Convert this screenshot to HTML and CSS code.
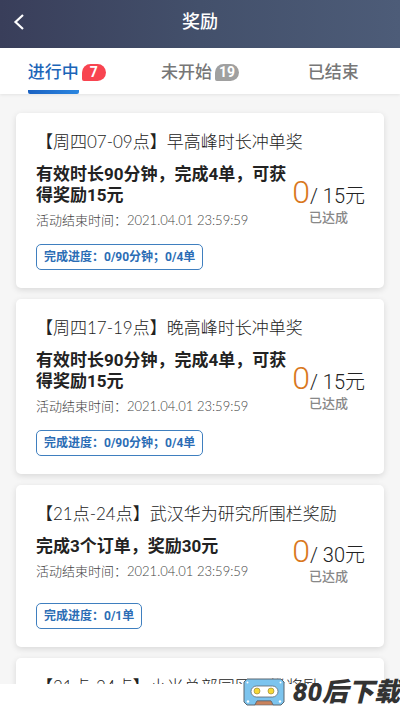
FILE: index.html
```html
<!DOCTYPE html>
<html lang="zh-CN">
<head>
<meta charset="utf-8">
<meta name="viewport" content="width=device-width, initial-scale=1">
<title>奖励</title>
<link rel="stylesheet" href="styles.css">
</head>
<body>
<div class="screen">
  <header class="topbar">
    <button class="back" type="button" aria-label="返回">
      <svg width="12" height="18" viewBox="0 0 12 18"><path d="M10 2 2.500 9 10 16" fill="none" stroke="#fff" stroke-width="2.200"/></svg>
    </button>
    <h1 class="topbar-title">奖励</h1>
  </header>
  <nav class="tabs">
    <a class="tab tab-active" href="#ongoing"><span class="tab-label">进行中</span><span class="badge badge-red">7</span></a>
    <a class="tab" href="#upcoming"><span class="tab-label">未开始</span><span class="badge">19</span></a>
    <a class="tab" href="#ended"><span class="tab-label">已结束</span></a>
  </nav>
  <main class="list">
    <article class="card">
      <h2 class="card-title">【周四07-09点】早高峰时长冲单奖</h2>
      <div class="card-body">
        <div class="info">
          <p class="rule">有效时长90分钟，完成4单，可获得奖励15元</p>
          <p class="time">活动结束时间：2021.04.01 23:59:59</p>
        </div>
        <div class="reward">
          <p class="amount"><span class="done">0</span>/ 15元</p>
          <p class="state">已达成</p>
        </div>
      </div>
      <p class="progress">完成进度：0/90分钟；0/4单</p>
    </article>
    <article class="card">
      <h2 class="card-title">【周四17-19点】晚高峰时长冲单奖</h2>
      <div class="card-body">
        <div class="info">
          <p class="rule">有效时长90分钟，完成4单，可获得奖励15元</p>
          <p class="time">活动结束时间：2021.04.01 23:59:59</p>
        </div>
        <div class="reward">
          <p class="amount"><span class="done">0</span>/ 15元</p>
          <p class="state">已达成</p>
        </div>
      </div>
      <p class="progress">完成进度：0/90分钟；0/4单</p>
    </article>
    <article class="card">
      <h2 class="card-title">【21点-24点】武汉华为研究所围栏奖励</h2>
      <div class="card-body">
        <div class="info">
          <p class="rule">完成3个订单，奖励30元</p>
          <p class="time">活动结束时间：2021.04.01 23:59:59</p>
        </div>
        <div class="reward">
          <p class="amount"><span class="done">0</span>/ 30元</p>
          <p class="state">已达成</p>
        </div>
      </div>
      <p class="progress">完成进度：0/1单</p>
    </article>
    <article class="card">
      <h2 class="card-title">【21点-24点】小米总部园区围栏奖励</h2>
    </article>
  </main>
  <footer class="footer"></footer>
  <div class="mark">
    <svg class="mark-logo" width="42" height="28" viewBox="0 0 42 28">
      <path d="M4 1H38L41 4V24L38 27H30L28 23H14L12 27H4L1 24V4Z" fill="#7cc4ee" stroke="#5a6670" stroke-width="1"/>
      <path d="M14 23H28L30 27H12Z" fill="#c9825c" stroke="#5a6670" stroke-width=".6"/>
      <rect x="8" y="8" width="27" height="11" rx="5.500" fill="#fff" stroke="#5a6670" stroke-width=".8"/>
      <circle cx="14" cy="13" r="3" fill="#f5d836" stroke="#8a7a30" stroke-width=".6"/>
      <circle cx="28" cy="13" r="3" fill="#f5d836" stroke="#8a7a30" stroke-width=".6"/>
      <g fill="#fff"><circle cx="4.500" cy="4.500" r="1"/><circle cx="37.500" cy="4.500" r="1"/><circle cx="5" cy="23.500" r="1.200"/><circle cx="37" cy="23.500" r="1.200"/></g>
    </svg>
    <span class="mark-text">80后下载</span>
  </div>
</div>
</body>
</html>
```
FILE: styles.css
```css
* { box-sizing: border-box; }
body, h1, h2, p { margin: 0; }
body {
  background: #fff;
  color: #222;
  font-family: Roboto, "Noto Sans CJK SC", sans-serif;
}
.screen {
  position: relative;
  display: flex;
  flex-direction: column;
  height: 100vh;
  overflow: hidden;
}
.topbar {
  display: grid;
  grid-template-columns: 40px 1fr 40px;
  align-items: center;
  flex: none;
  height: 48px;
  padding-bottom: 4px;
  background: linear-gradient(90deg, #393e5a, #43506b 50%, #4d5c78);
  color: #fff;
}
.back {
  display: flex;
  padding: 0 0 0 13px;
  border: 0;
  background: none;
}
.topbar-title {
  font-size: 18px;
  font-weight: 500;
  line-height: 24px;
  text-align: center;
}
.tabs {
  display: flex;
  flex: none;
  height: 46px;
  background: #fff;
  box-shadow: 0 1px 3px rgba(0, 0, 0, .08);
  z-index: 1;
}
.tab {
  display: flex;
  flex: 1;
  align-items: stretch;
  justify-content: center;
  gap: 3px;
  color: #777;
  font-size: 17px;
  font-weight: 500;
  text-decoration: none;
}
.tab-label {
  padding-top: 12px;
  line-height: 24px;
}
.tab-active { color: #1c65b8; }
.tab-active .tab-label {
  background: linear-gradient(90deg, #1b62c2, #2b86e0) bottom / 100% 4px no-repeat;
  border-radius: 2px;
}
.badge {
  min-width: 24px;
  height: 17px;
  margin-top: 16px;
  border-radius: 9px 9px 9px 2px;
  background: #a0a0a0;
  color: #fff;
  font-size: 14px;
  font-weight: 700;
  line-height: 17px;
  text-align: center;
}
.badge-red { background: #f84450; }
.list {
  display: flex;
  flex: 1;
  flex-direction: column;
  gap: 11px;
  min-height: 0;
  padding: 19px 16px 0;
  overflow: hidden;
  background: #f6f6f6;
}
.card {
  flex: none;
  padding: 17px 19px 18px 20px;
  border-radius: 5px;
  background: #fff;
  box-shadow: 0 2px 6px rgba(0, 0, 0, .12);
}
.card-title {
  font-family: Lato, "Noto Sans CJK SC", sans-serif;
  font-size: 17px;
  font-weight: 300;
  line-height: 24px;
}
.card-body {
  display: flex;
  align-items: flex-end;
  justify-content: space-between;
  min-height: 63px;
  padding-top: 10px;
}
.info {
  flex: 1;
  align-self: flex-start;
}
.rule {
  font-size: 17px;
  font-weight: 700;
  line-height: 21px;
}
.time {
  margin-top: 4px;
  color: #444;
  font-family: Lato, "Noto Sans CJK SC", sans-serif;
  font-size: 13px;
  font-weight: 300;
  line-height: 20px;
}
.reward {
  flex: none;
  margin-bottom: 4px;
  text-align: center;
}
.amount {
  font-size: 20px;
  font-weight: 300;
  line-height: 28px;
  white-space: nowrap;
}
.done {
  color: #d9781e;
  font-size: 32px;
}
.state {
  color: #888;
  font-size: 13px;
  font-weight: 500;
  line-height: 16px;
}
.progress {
  width: fit-content;
  margin-top: 14px;
  padding: 0 7px;
  border: 1px solid #3f7fbf;
  border-radius: 5px;
  color: #2b6db5;
  font-size: 12px;
  font-weight: 700;
  line-height: 24px;
}
.footer {
  flex: none;
  height: 26px;
  background: #fff;
}
.mark {
  position: absolute;
  right: 0;
  bottom: 4px;
  z-index: 2;
  display: flex;
  align-items: center;
  gap: 8px;
}
.mark-text {
  color: #333;
  font-size: 26px;
  font-style: italic;
  font-weight: 900;
  line-height: 28px;
}
```
